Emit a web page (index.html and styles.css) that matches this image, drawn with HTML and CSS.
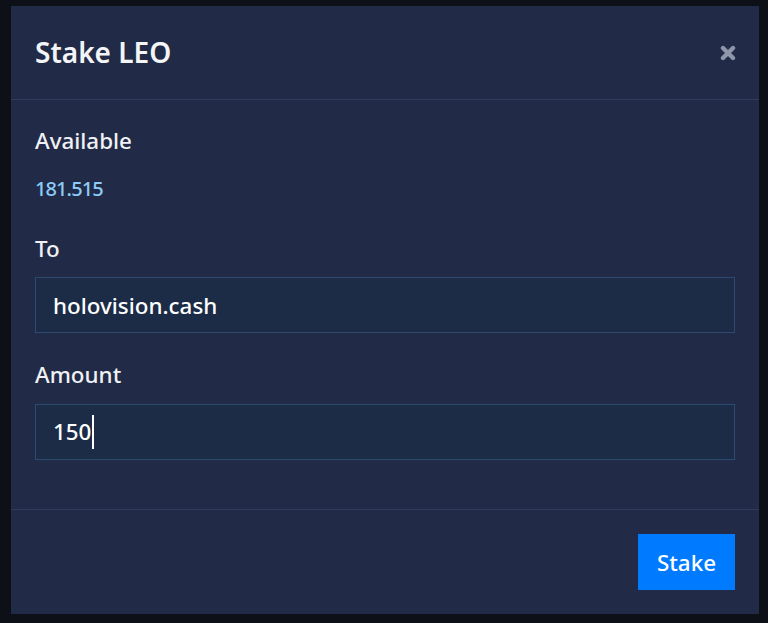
FILE: index.html
```html
<!DOCTYPE html>
<html lang="en">
<head>
<meta charset="utf-8">
<title>Stake LEO</title>
<link rel="stylesheet" href="styles.css">
</head>
<body>
<div class="modal">
  <div class="modal-header">
    <h2 class="modal-title">Stake LEO</h2>
    <button class="close" aria-label="Close">
      <svg width="16" height="16" viewBox="0 0 16 16"><path d="M3 3 L13 13 M13 3 L3 13" stroke="#8e96aa" stroke-width="4.4" stroke-linecap="round"/></svg>
    </button>
  </div>
  <div class="modal-body">
    <div class="group">
      <div class="label">Available</div>
      <div class="balance">181.515</div>
    </div>
    <div class="group">
      <div class="label">To</div>
      <div class="field">holovision.cash</div>
    </div>
    <div class="group last">
      <div class="label">Amount</div>
      <div class="field">150<span class="caret"></span></div>
    </div>
  </div>
  <div class="modal-footer">
    <button class="btn">Stake</button>
  </div>
</div>
</body>
</html>
```
FILE: styles.css
```css
* { box-sizing: border-box; }
html, body { height: 100%; }
body {
  margin: 0;
  background: #0d1017;
  font-family: "Noto Sans", "Open Sans", sans-serif;
  color: #f2f3f5;
  padding: 6px 9px 9px 11px;
  display: flex;
}
.modal {
  width: 748px;
  height: 608px;
  background: #212a46;
  display: flex;
  flex-direction: column;
}
.modal-header {
  height: 94px;
  padding: 0 23px 0 24px;
  border-bottom: 1px solid #323b5b;
  display: flex;
  align-items: center;
  justify-content: space-between;
}
.modal-title {
  margin: 0;
  font-size: 28px;
  font-weight: 600;
  line-height: 1.2;
  color: #f4f5f7;
}
.close {
  background: none;
  border: 0;
  padding: 0;
  width: 16px;
  height: 16px;
  display: flex;
}
.modal-body {
  padding: 24px 24px 23px;
  flex: 1;
}
.group { margin-bottom: 25px; }
.group.last { margin-bottom: 24px; }
.label {
  font-size: 22.4px;
  font-weight: 500;
  line-height: 33.6px;
  margin-bottom: 12px;
  color: #f0f1f4;
}
.balance {
  font-size: 20px;
  font-weight: 500;
  line-height: 36px;
  color: #8dcbf8;
  letter-spacing: -0.9px;
  margin-top: -12px;
  padding-top: 13px;
}
.field {
  height: 56px;
  border: 1px solid #2d4a70;
  background: #1c2c47;
  padding: 0 17px;
  font-size: 22.4px;
  font-weight: 500;
  color: #ffffff;
  display: flex;
  align-items: center;
}
.caret {
  display: inline-block;
  width: 2px;
  height: 34px;
  background: #ffffff;
  margin-left: 1px;
}
.modal-footer {
  border-top: 1px solid #323b5b;
  padding: 24px 24px 24px;
  display: flex;
  justify-content: flex-end;
}
.btn {
  width: 97px;
  height: 56px;
  border: 0;
  background: #007bff;
  color: #ffffff;
  font-family: "Noto Sans", "Open Sans", sans-serif;
  font-size: 22.4px;
  font-weight: 500;
  padding: 0;
}
```
